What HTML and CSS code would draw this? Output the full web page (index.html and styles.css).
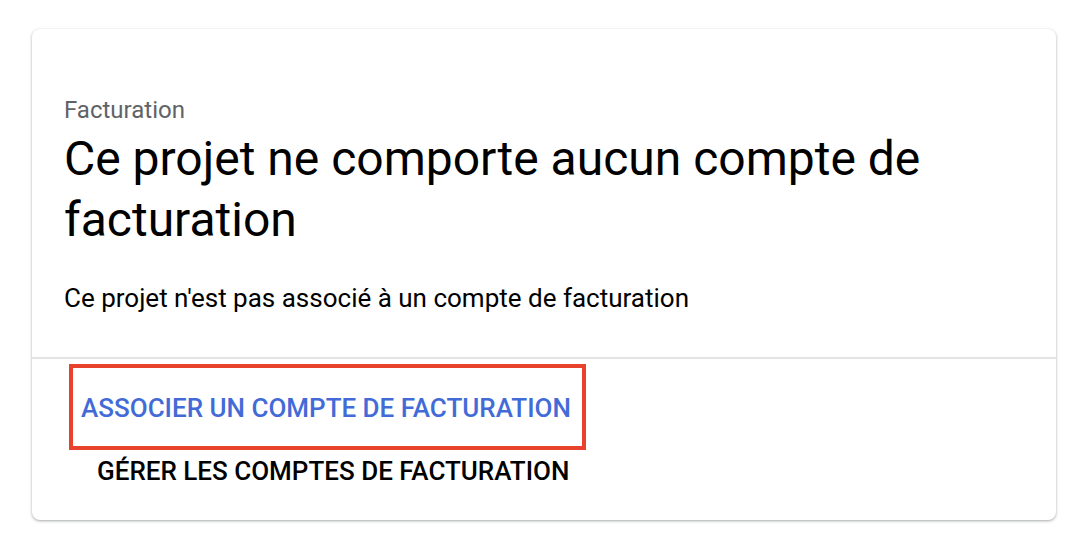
FILE: index.html
```html
<!DOCTYPE html>
<html lang="fr">
<head>
<meta charset="utf-8">
<title>Facturation</title>
<link rel="stylesheet" href="styles.css">
</head>
<body>
<div class="page">
  <section class="card">
    <div class="card-body">
      <div class="label">Facturation</div>
      <h1 class="title">Ce projet ne comporte aucun compte de facturation</h1>
      <p class="text">Ce projet n'est pas associé à un compte de facturation</p>
    </div>
    <div class="actions">
      <button class="btn btn-primary">ASSOCIER UN COMPTE DE FACTURATION</button>
      <button class="btn btn-secondary">GÉRER LES COMPTES DE FACTURATION</button>
    </div>
  </section>
</div>
</body>
</html>
```

FILE: styles.css
```css
* { box-sizing: border-box; }
html, body { margin: 0; padding: 0; background: #ffffff; }
body { font-family: Roboto, "Liberation Sans", Arial, sans-serif; color: #000; }

.page {
  padding: 29px 26px 14px 32px;
}

.card {
  width: 1024px;
  height: 491px;
  background: #fff;
  border-radius: 8px;
  box-shadow: 0 1px 2px 0 rgba(60,64,67,0.30), 0 1px 3px 1px rgba(60,64,67,0.12);
  display: flex;
  flex-direction: column;
}

.card-body {
  padding: 65px 32px 43px 32px;
  border-bottom: 2px solid #e3e3e3;
}

.label {
  font-size: 24px;
  line-height: 32px;
  color: #5f6368;
}

.title {
  margin: 2px 0 0 0;
  font-size: 48px;
  line-height: 61px;
  font-weight: 400;
  color: #000;
}

.text {
  margin: 32px 0 0 0;
  font-size: 26px;
  line-height: 32px;
  color: #000;
}

.actions {
  padding: 5px 0 0 37px;
  display: flex;
  flex-direction: column;
  align-items: flex-start;
  gap: 5px;
}

.btn {
  font-family: Roboto, "Liberation Sans", Arial, sans-serif;
  font-weight: 500;
  background: none;
  border: 0;
  margin: 0;
  text-align: left;
  cursor: pointer;
}

.btn-primary {
  width: 517px;
  border: 4px solid #e8412c;
  padding: 24px 8px 22px 8px;
  font-size: 26px;
  line-height: 32px;
  color: #426bd8;
}

.btn-secondary {
  padding: 0 0 0 28px;
  font-size: 26px;
  line-height: 32px;
  color: #000;
}
```
